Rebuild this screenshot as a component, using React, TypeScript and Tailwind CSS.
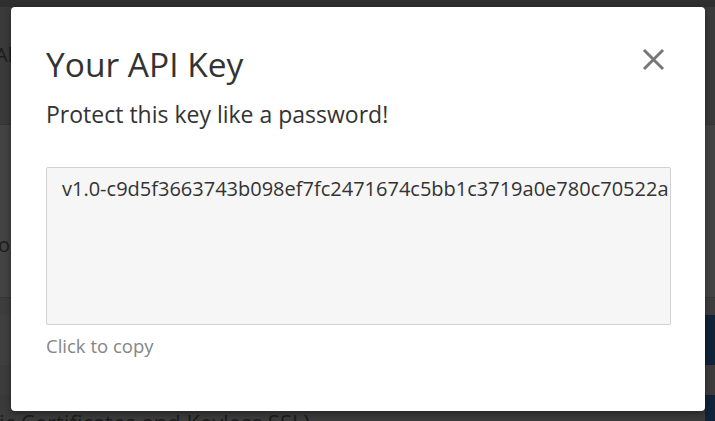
export default function App() {
  return (
    <div className="relative w-[715px] h-[421px] overflow-hidden bg-[#3e3e3e] font-['Open_Sans',sans-serif]">
      {/* dimmed page behind the modal */}
      <div className="flex flex-col h-full">
        <div className="shrink-0 h-[7px] bg-[#2f2f2f]" />
        <div className="shrink-0 h-[118px] bg-[#3a3a3a] border-b border-[#333] flex items-center pb-[22px]">
          <span className="-ml-[5px] text-[20px] text-[#1c1c1c]">Al</span>
        </div>
        <div className="shrink-0 h-[172px] bg-[#434343] flex items-end pb-[40px]">
          <span className="-ml-[2px] text-[20px] leading-[24px] text-[#1c1c1c]">o</span>
        </div>
        <div className="shrink-0 h-[18px] bg-[#3d3d3d] border-t border-[#363636]" />
        <div className="shrink-0 h-[50px] bg-[#3f3f3f] flex justify-end">
          <div className="w-[10px] bg-[#0f2339]" />
        </div>
        <div className="shrink-0 h-[30px] bg-[#3c3c3c]" />
        <div className="flex-1 min-h-0 overflow-hidden bg-[#3a3a3a] flex justify-between">
          <span className="-ml-[1px] mt-[14px] text-[22px] leading-[26px] text-[#1c1c1c] whitespace-nowrap">
            ic Certificates and Keyless SSL)
          </span>
          <div className="w-[10px] bg-[#0f2339]" />
        </div>
      </div>

      {/* modal */}
      <div className="absolute left-[11px] top-[7px] w-[694px] h-[404px] bg-white rounded-[4px] shadow-[0_2px_6px_rgba(0,0,0,0.4)] pl-[35px] pt-[37px]">
        <button className="absolute left-[631px] top-[41px] w-[23px] h-[23px]">
          <svg width="23" height="23" viewBox="0 0 23 23">
            <path d="M2 2 L21 21 M21 2 L2 21" stroke="#777" strokeWidth="3" fill="none" />
          </svg>
        </button>
        <h2 className="text-[33.5px] leading-[40px] text-[#333] font-normal">Your API Key</h2>
        <p className="mt-[15px] text-[23px] leading-[30px] text-[#333]">Protect this key like a password!</p>
        <div className="mt-[38px] w-[625px] h-[158px] bg-[#f6f6f6] border border-[#d2d2d2] rounded-[2px] pl-[15px] pt-[7px] overflow-hidden whitespace-nowrap text-[20px] leading-[28px] text-[#333]">
          v1.0-c9d5f3663743b098ef7fc2471674c5bb1c3719a0e780c70522a
        </div>
        <div className="mt-[9px] text-[18.5px] leading-[24px] text-[#858585]">Click to copy</div>
      </div>
    </div>
  );
}
